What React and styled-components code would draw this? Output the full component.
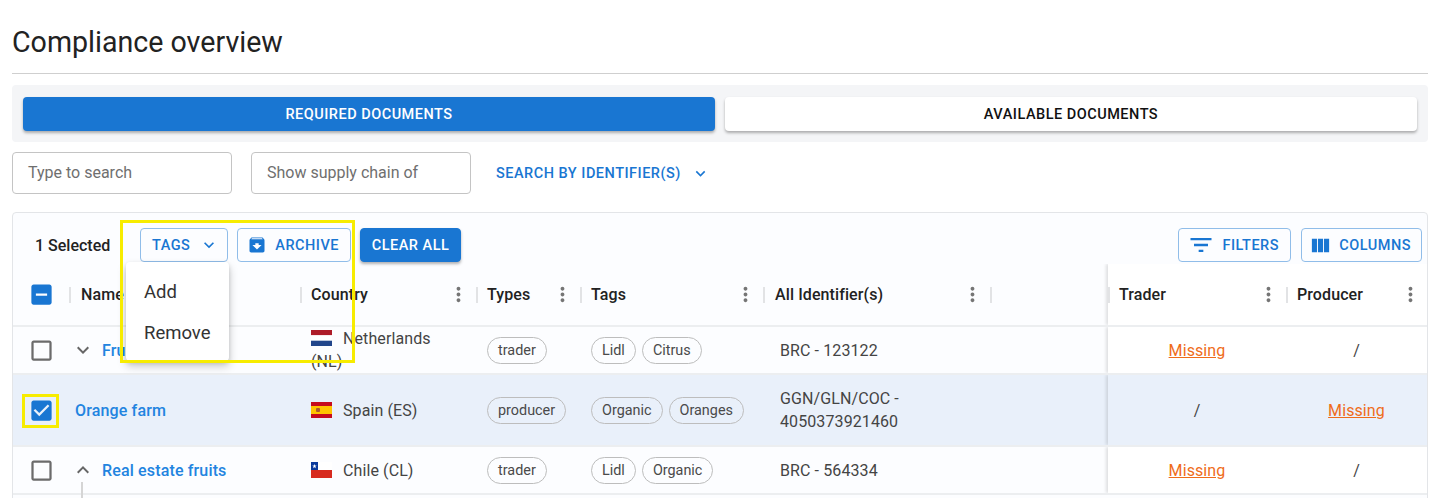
import React from "react";
import styled, { createGlobalStyle } from "styled-components";

const GlobalStyle = createGlobalStyle`
  html, body {
    margin: 0;
    height: 498px;
    overflow: hidden;
    background: #fff;
  }
  * {
    box-sizing: border-box;
  }
`;

const columns = "56px 231px 176px 104px 183px 227px 118px 178px 141px";
const blue = "#1976d2";

const Page = styled.div`
  position: relative;
  width: 1430px;
  height: 498px;
  overflow: hidden;
  padding: 0 2px 0 12px;
  font-family: Roboto, "Liberation Sans", sans-serif;
  color: #333;
`;

const TitleBar = styled.div`
  height: 74px;
  padding-top: 23px;
  border-bottom: 1px solid #cfcfcf;
`;

const Title = styled.h1`
  margin: 0;
  font-size: 28.6px;
  line-height: 38px;
  font-weight: 400;
  color: #222;
`;

const TabPanel = styled.div`
  display: grid;
  grid-template-columns: 1fr 1fr;
  gap: 10px;
  height: 57px;
  margin-top: 11px;
  padding: 12px 11px;
  background: #f4f5f7;
  border-radius: 4px;
`;

const Tab = styled.button`
  height: 34px;
  border: none;
  border-radius: 4px;
  font: 500 14.5px Roboto, sans-serif;
  letter-spacing: 0.5px;
  background: ${({ $active }) => ($active ? blue : "#fff")};
  color: ${({ $active }) => ($active ? "#fff" : "#111")};
  box-shadow: 0 2px 3px rgba(0, 0, 0, 0.3);
`;

const SearchRow = styled.div`
  display: flex;
  align-items: center;
  height: 42px;
  margin-top: 10px;
`;

const SearchBox = styled.div`
  display: flex;
  align-items: center;
  width: 220px;
  height: 42px;
  margin-right: 19px;
  padding: 0 0 1px 15px;
  border: 1px solid #c4c4c4;
  border-radius: 4px;
  font-size: 16px;
  color: #6f6f6f;
`;

const IdentifierLink = styled.div`
  display: flex;
  align-items: center;
  margin-left: 6px;
  font-size: 14.5px;
  font-weight: 500;
  letter-spacing: 0.5px;
  color: ${blue};
`;

const Card = styled.div`
  height: 300px;
  margin-top: 18px;
  background: #fcfdff;
  border: 1px solid #e3e5e8;
  border-radius: 4px 4px 0 0;
`;

const Toolbar = styled.div`
  display: flex;
  align-items: center;
  height: 51px;
  padding: 15px 5px 2px 22px;
`;

const Selected = styled.span`
  width: 105px;
  font-size: 16px;
  font-weight: 500;
  color: #222;
`;

const ToolButton = styled.button`
  display: flex;
  align-items: center;
  justify-content: ${({ $center }) => ($center ? "center" : "space-between")};
  width: ${({ $width }) => $width}px;
  height: 34px;
  margin-right: ${({ $gap }) => $gap ?? 9}px;
  padding: 0 ${({ $pad }) => $pad ?? 11}px;
  border-radius: 4px;
  border: 1px solid ${({ $solid }) => ($solid ? blue : "#90bde9")};
  background: ${({ $solid }) => ($solid ? blue : "transparent")};
  color: ${({ $solid }) => ($solid ? "#fff" : blue)};
  box-shadow: ${({ $solid }) => ($solid ? "0 2px 3px rgba(0, 0, 0, 0.3)" : "none")};
  font: 500 14.5px Roboto, sans-serif;
  letter-spacing: 0.5px;
  white-space: nowrap;
`;

const Spacer = styled.div`
  flex: 1;
`;

const Row = styled.div`
  display: grid;
  grid-template-columns: ${columns};
  height: ${({ $height }) => $height}px;
  border-bottom: 2px solid #eceef0;
  background: ${({ $selected }) => ($selected ? "#e9f0fa" : "transparent")};
`;

const HeadCell = styled.div`
  display: flex;
  align-items: center;
  background: ${({ $pinned }) => ($pinned ? "#fff" : "transparent")};
  box-shadow: ${({ $edge }) => ($edge ? "-2px 0 3px rgba(0, 0, 0, 0.12)" : "none")};
  clip-path: ${({ $edge }) => ($edge ? "inset(0 0 0 -6px)" : "none")};
  padding-right: ${({ $right }) => $right ?? 6}px;
`;

const Sep = styled.span`
  flex: none;
  width: 2px;
  height: 16px;
  margin-right: ${({ $gap }) => $gap ?? 9}px;
  background: #e2e3e5;
`;

const HeadLabel = styled.span`
  flex: 1;
  font-size: 16px;
  font-weight: 500;
  letter-spacing: 0.1px;
  color: #222;
`;

const Cell = styled.div`
  display: flex;
  align-items: center;
  min-width: 0;
  padding-left: ${({ $pad }) => $pad ?? 11}px;
  justify-content: ${({ $center }) => ($center ? "center" : "flex-start")};
  font-size: 16px;
  line-height: 23px;
  color: #444;
  letter-spacing: 0.1px;
`;

const PinnedCell = styled(Cell)`
  padding-left: 0;
  background: ${({ $selected }) => ($selected ? "#e9f0fa" : "#fff")};
  box-shadow: ${({ $edge }) => ($edge ? "-2px 0 3px rgba(0, 0, 0, 0.12)" : "none")};
  clip-path: ${({ $edge }) => ($edge ? "inset(0 0 0 -6px)" : "none")};
`;

const CountryText = styled.div`
  padding-right: 16px;
`;

const Flag = styled.svg`
  display: inline-block;
  vertical-align: -2px;
  width: 21px;
  height: 16px;
  margin-right: 11px;
`;

const NameLink = styled.a`
  color: #2284e0;
  font-weight: 500;
  font-size: 16px;
  letter-spacing: 0.15px;
  margin-left: ${({ $indent }) => $indent ?? 0}px;
  white-space: nowrap;
`;

const Chips = styled.div`
  display: flex;
  gap: 6px;
`;

const Chip = styled.span`
  display: inline-flex;
  align-items: center;
  height: 27px;
  padding: 0 10px;
  border: 1px solid #bdbdbd;
  border-radius: 14px;
  font-size: 14.4px;
  letter-spacing: 0;
  color: #4a4a4a;
`;

const Missing = styled.a`
  color: #ef6c1a;
  text-decoration: underline;
  font-size: 16px;
`;

const TreeLine = styled.div`
  position: absolute;
  left: 81px;
  top: 482px;
  width: 2px;
  height: 16px;
  background: #d5d5d5;
`;

const Menu = styled.div`
  position: absolute;
  left: 126px;
  top: 262px;
  width: 103px;
  height: 99px;
  padding-top: 10px;
  background: #fff;
  border-radius: 4px;
  box-shadow: 0 5px 10px rgba(0, 0, 0, 0.22), 0 2px 4px rgba(0, 0, 0, 0.12);
  z-index: 2;
`;

const MenuItem = styled.div`
  height: 41px;
  padding-left: 18px;
  font-size: 18.5px;
  line-height: 41px;
  color: #333;
`;

const Highlight = styled.div`
  position: absolute;
  left: ${({ $x }) => $x}px;
  top: ${({ $y }) => $y}px;
  width: ${({ $w }) => $w}px;
  height: ${({ $h }) => $h}px;
  border: 3px solid #f7ec00;
  z-index: 3;
`;

const IconSvg = styled.svg`
  flex: none;
  margin-left: ${({ $left }) => $left ?? 0}px;
  margin-right: ${({ $right }) => $right ?? 0}px;
`;

const Glyph = ({ d, size = 24, color = "currentColor", left, right }) => (
  <IconSvg width={size} height={size} viewBox="0 0 24 24" fill={color} $left={left} $right={right}>
    <path d={d} />
  </IconSvg>
);

const icons = {
  box: "M19 5v14H5V5h14m0-2H5c-1.1 0-2 .9-2 2v14c0 1.1.9 2 2 2h14c1.1 0 2-.9 2-2V5c0-1.1-.9-2-2-2z",
  checked: "M19 3H5c-1.11 0-2 .9-2 2v14c0 1.1.89 2 2 2h14c1.11 0 2-.9 2-2V5c0-1.1-.89-2-2-2zm-9 14l-5-5 1.41-1.41L10 14.17l7.59-7.59L19 8l-9 9z",
  partial: "M19 3H5c-1.1 0-2 .9-2 2v14c0 1.1.9 2 2 2h14c1.1 0 2-.9 2-2V5c0-1.1-.9-2-2-2zm-2 10H7v-2h10v2z",
  down: "M16.59 8.59 12 13.17 7.41 8.59 6 10l6 6 6-6z",
  up: "m12 8-6 6 1.41 1.41L12 10.83l4.59 4.58L18 14z",
  archive: "M20.54 5.23l-1.39-1.68C18.88 3.21 18.47 3 18 3H6c-.47 0-.88.21-1.16.55L3.46 5.23C3.17 5.57 3 6.02 3 6.5V19c0 1.1.9 2 2 2h14c1.1 0 2-.9 2-2V6.5c0-.48-.17-.93-.46-1.27zM12 17.5L6.5 12H10v-2h4v2h3.5L12 17.5zM5.12 5l.81-1h12l.94 1H5.12z",
  filter: "M10 18h4v-2h-4v2zM3 6v2h18V6H3zm3 7h12v-2H6v2z",
  columns: "M14.67 5v14H9.33V5h5.34zm1 14H21V5h-5.33v14zm-7.34 0V5H3v14h5.33z",
  more: "M12 8c1.1 0 2-.9 2-2s-.9-2-2-2-2 .9-2 2 .9 2 2 2zm0 2c-1.1 0-2 .9-2 2s.9 2 2 2 2-.9 2-2-.9-2-2-2zm0 6c-1.1 0-2 .9-2 2s.9 2 2 2 2-.9 2-2-.9-2-2-2z",
};

const Checkbox = ({ kind }) => (
  <Cell $pad={0} $center>
    <Glyph d={icons[kind]} size={27} color={kind === "box" ? "#6b6b6b" : blue} />
  </Cell>
);

const Kebab = () => <Glyph d={icons.more} size={23} color="#757575" />;

const NetherlandsFlag = () => (
  <Flag viewBox="0 0 21 16">
    <rect width="21" height="5.3" fill="#ae1c28" />
    <rect y="5.3" width="21" height="5.4" fill="#fff" />
    <rect y="10.7" width="21" height="5.3" fill="#21468b" />
  </Flag>
);

const SpainFlag = () => (
  <Flag viewBox="0 0 21 16">
    <rect width="21" height="16" fill="#c60b1e" />
    <rect y="4" width="21" height="8" fill="#ffc400" />
    <rect x="5" y="6" width="4" height="4" rx="1" fill="#ad5a2c" />
  </Flag>
);

const ChileFlag = () => (
  <Flag viewBox="0 0 21 16">
    <rect width="21" height="8" fill="#fff" />
    <rect y="8" width="21" height="8" fill="#d72b1f" />
    <rect width="7" height="8" fill="#0a3a9c" />
    <polygon points="3.5,2 4.1,3.6 5.7,3.6 4.4,4.6 4.9,6.2 3.5,5.2 2.1,6.2 2.6,4.6 1.3,3.6 2.9,3.6" fill="#fff" />
  </Flag>
);

const rows = [
  {
    height: 48,
    check: "box",
    expand: "down",
    name: "Fruit",
    flag: <NetherlandsFlag />,
    country: "Netherlands (NL)",
    type: "trader",
    tags: ["Lidl", "Citrus"],
    id: "BRC - 123122",
    trader: true,
  },
  {
    height: 72,
    check: "checked",
    name: "Orange farm",
    flag: <SpainFlag />,
    country: "Spain (ES)",
    type: "producer",
    tags: ["Organic", "Oranges"],
    id: "GGN/GLN/COC - 4050373921460",
    selected: true,
  },
  {
    height: 48,
    check: "box",
    expand: "up",
    name: "Real estate fruits",
    flag: <ChileFlag />,
    country: "Chile (CL)",
    type: "trader",
    tags: ["Lidl", "Organic"],
    id: "BRC - 564334",
    trader: true,
  },
];

const headers = [
  { label: "Name", kebab: false, gap: 10 },
  { label: "Country", kebab: true },
  { label: "Types", kebab: true },
  { label: "Tags", kebab: true },
  { label: "All Identifier(s)", kebab: true, gap: 10 },
  { label: "", kebab: false },
];

const App = () => (
  <Page>
    <GlobalStyle />
    <TitleBar>
      <Title>Compliance overview</Title>
    </TitleBar>

    <TabPanel>
      <Tab $active>REQUIRED DOCUMENTS</Tab>
      <Tab>AVAILABLE DOCUMENTS</Tab>
    </TabPanel>

    <SearchRow>
      <SearchBox>Type to search</SearchBox>
      <SearchBox>Show supply chain of</SearchBox>
      <IdentifierLink>
        SEARCH BY IDENTIFIER(S)
        <Glyph d={icons.down} size={19} left={10} />
      </IdentifierLink>
    </SearchRow>

    <Card>
      <Toolbar>
        <Selected>1 Selected</Selected>
        <ToolButton $width={88}>
          TAGS
          <Glyph d={icons.down} size={20} right={-3} />
        </ToolButton>
        <ToolButton $width={114}>
          <Glyph d={icons.archive} size={20} left={-2} />
          ARCHIVE
        </ToolButton>
        <ToolButton $width={101} $solid $center $pad={4}>
          CLEAR ALL
        </ToolButton>
        <Spacer />
        <ToolButton $width={113} $gap={10}>
          <Glyph d={icons.filter} size={28} left={-3} />
          FILTERS
        </ToolButton>
        <ToolButton $width={121} $gap={0} $pad={10}>
          <Glyph d={icons.columns} size={23} left={-3} />
          COLUMNS
        </ToolButton>
      </Toolbar>

      <Row $height={63}>
        <Checkbox kind="partial" />
        {headers.map((h) => (
          <HeadCell key={h.label}>
            <Sep $gap={h.gap} />
            <HeadLabel>{h.label}</HeadLabel>
            {h.kebab && <Kebab />}
          </HeadCell>
        ))}
        <HeadCell $pinned $edge>
          <Sep />
          <HeadLabel>Trader</HeadLabel>
          <Kebab />
        </HeadCell>
        <HeadCell $pinned $right={5}>
          <Sep />
          <HeadLabel>Producer</HeadLabel>
          <Kebab />
        </HeadCell>
      </Row>

      {rows.map((row) => (
        <Row key={row.name} $height={row.height} $selected={row.selected}>
          <Checkbox kind={row.check} />
          <Cell $pad={row.expand ? 0 : 6}>
            {row.expand && <Glyph d={icons[row.expand]} size={24} color="#666" left={2} />}
            <NameLink $indent={row.expand ? 7 : 0}>{row.name}</NameLink>
          </Cell>
          <Cell>
            <CountryText>
              {row.flag}
              {row.country}
            </CountryText>
          </Cell>
          <Cell>
            <Chip>{row.type}</Chip>
          </Cell>
          <Cell>
            <Chips>
              {row.tags.map((tag) => (
                <Chip key={tag}>{tag}</Chip>
              ))}
            </Chips>
          </Cell>
          <Cell $pad={17}>{row.id}</Cell>
          <Cell />
          <PinnedCell $center $edge $selected={row.selected}>
            {row.trader ? <Missing>Missing</Missing> : "/"}
          </PinnedCell>
          <PinnedCell $center $selected={row.selected}>
            {row.trader ? "/" : <Missing>Missing</Missing>}
          </PinnedCell>
        </Row>
      ))}
    </Card>

    <TreeLine />

    <Menu>
      <MenuItem>Add</MenuItem>
      <MenuItem>Remove</MenuItem>
    </Menu>
    <Highlight $x={120} $y={220} $w={235} $h={143} />
    <Highlight $x={22} $y={394} $w={37} $h={34} />
  </Page>
);

export default App;
